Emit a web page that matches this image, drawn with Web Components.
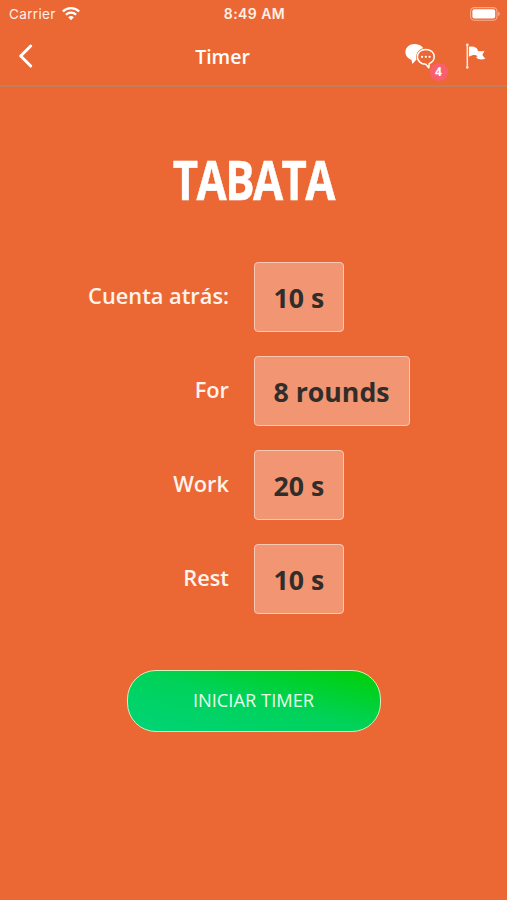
<!DOCTYPE html>
<html lang="es">
<head>
<meta charset="utf-8">
<title>Timer</title>
<style>
  body {
    margin: 0;
    background-color: #eb6834;
    color: white;
    font-family: "Open Sans", "Noto Sans", sans-serif;
  }
</style>
</head>
<body>
<timer-app></timer-app>

<script>
class StatusBar extends HTMLElement {
  constructor() {
    super();
    this.shadowDOM = this.attachShadow({mode: 'open'});
  }

  connectedCallback() {
    this.render();
  }

  render() {
    this.shadowDOM.innerHTML = `
    <style>
      :host {
        box-sizing: border-box;
        display: grid;
        grid-template-columns: 1fr auto 1fr;
        align-items: center;
        height: 27px;
        padding: 0 7px 0 9px;
        font-family: Inter, sans-serif;
        font-size: 13.5px;
        color: #fff0e8;
      }

      .carrier {
        display: flex;
        align-items: center;
        gap: 6px;
        letter-spacing: 0.35px;
      }

      .clock {
        font-weight: 600;
        font-size: 14px;
        letter-spacing: 0.45px;
      }

      .battery {
        justify-self: end;
      }

      svg {
        display: block;
      }
    </style>
    <div class="carrier">
      <span>Carrier</span>
      <svg width="18" height="14" viewBox="0 0 18 14" fill="none" stroke="white" stroke-width="2.3">
        <path d="M0.9 4.5a11.5 11.5 0 0 1 16.2 0"/>
        <path d="M3.9 7.8a7.2 7.2 0 0 1 10.2 0"/>
        <path d="M6.2 10.3a4 4 0 0 1 5.6 0L9 13.2z" fill="white" stroke="none"/>
      </svg>
    </div>
    <div class="clock"><slot></slot></div>
    <svg class="battery" width="30" height="14" viewBox="0 0 30 14">
      <rect x="0.6" y="0.6" width="26.4" height="12.6" rx="3.8" fill="none" stroke="#f6ae90" stroke-width="1.1"/>
      <rect x="2.4" y="2.3" width="22.8" height="9.2" rx="2" fill="white"/>
      <path d="M28.2 4.8q1.6 .6 1.6 2.1t-1.6 2.1z" fill="#f6ae90"/>
    </svg>
    `;
  }
}
customElements.define('status-bar', StatusBar);


class NavBar extends HTMLElement {
  constructor() {
    super();
    this.shadowDOM = this.attachShadow({mode: 'open'});
  }

  connectedCallback() {
    this.render();
  }

  render() {
    this.shadowDOM.innerHTML = `
    <style>
      :host {
        box-sizing: border-box;
        display: grid;
        grid-template-columns: 1fr auto 1fr;
        align-items: center;
        height: 60px;
        padding: 0 21px 0 18px;
        border-bottom: 2px solid #c27d5c;
      }

      h1 {
        margin: 0 59px 0 0;
        padding-top: 2px;
        font-size: 19.5px;
        line-height: 28px;
        font-weight: 600;
      }

      .actions {
        display: flex;
        justify-content: flex-end;
        gap: 30px;
      }

      .chat {
        position: relative;
      }

      /* unread counter over the chat icon */
      .badge {
        position: absolute;
        left: 24.5px;
        top: 20px;
        width: 18px;
        height: 18px;
        border-radius: 50%;
        background-color: #fa5f70;
        font-size: 12px;
        line-height: 18px;
        font-weight: 700;
        text-align: center;
      }

      svg {
        display: block;
      }
    </style>
    <svg width="16" height="26" viewBox="0 0 16 26" fill="none" stroke="white" stroke-width="3" stroke-linecap="round" stroke-linejoin="round">
      <path d="M12.7 3L2.7 13l10 10"/>
    </svg>
    <h1><slot></slot></h1>
    <div class="actions">
      <div class="chat">
        <svg width="30" height="26" viewBox="0 0 30 26">
          <path d="M9.4 1C4.6 1 .4 4.3 .4 9c0 3.7 2.5 6.5 6 7.7L7.4 21l3.6-3.9L18.2 12 18 4.7C16 2.3 13 1 9.4 1z" fill="white"/>
          <path d="M20.8 6.4c-4.9 0-8.4 3.2-8.4 7.4 0 4.2 3.5 7.4 8.4 7.4l3 3.7.4-4.3c3-1.2 5-3.7 5-6.8 0-4.2-3.5-7.4-8.4-7.4z" fill="#eb6834" stroke="#eb6834" stroke-width="2.8"/>
          <path d="M20.8 6.4c-4.9 0-8.4 3.2-8.4 7.4 0 4.2 3.5 7.4 8.4 7.4l3 3.7.4-4.3c3-1.2 5-3.7 5-6.8 0-4.2-3.5-7.4-8.4-7.4z" fill="#eb6834" stroke="white" stroke-width="1.5" stroke-linejoin="round"/>
          <g fill="white"><circle cx="17" cy="13.8" r="1.15"/><circle cx="20.8" cy="13.8" r="1.15"/><circle cx="24.6" cy="13.8" r="1.15"/></g>
        </svg>
        <span class="badge">4</span>
      </div>
      <svg width="21" height="26" viewBox="0 0 21 26">
        <path d="M2.3 2.5v22" stroke="#ffe6da" stroke-width="1.5"/>
        <circle cx="2.3" cy="1.9" r="1.4" fill="#ffe6da"/>
        <circle cx="2.3" cy="24.4" r="1.3" fill="#ffe6da"/>
        <path d="M3.9 3.9c3.5-.9 7.6-.6 9 3.6v6.2C11 11.3 8 11.5 3.9 13.7z" fill="white"/>
        <path d="M12.5 7.7c2.4 .9 4.8 .8 7 0l-2.2 4.3 3 3.8c-3 1.2-7.4 1.3-9.2-1.7l1.4-.6z" fill="white"/>
      </svg>
    </div>
    `;
  }
}
customElements.define('nav-bar', NavBar);


class TimerField extends HTMLElement {
  constructor() {
    super();
    this.shadowDOM = this.attachShadow({mode: 'open'});
  }

  connectedCallback() {
    this.render();
  }

  render() {
    this.shadowDOM.innerHTML = `
    <style>
      :host {
        display: grid;
        grid-template-columns: 229px 1fr;
        column-gap: 25px;
        align-items: center;
      }

      .label {
        padding-bottom: 2px;
        font-size: 21.8px;
        line-height: 30px;
        font-weight: 600;
        text-align: right;
        color: #fff3ec;
      }

      .value {
        box-sizing: border-box;
        justify-self: start;
        height: 70px;
        padding: 0 19px 0 18.5px;
        border: 1px solid #f9c9b6;
        border-radius: 4px;
        background-color: #f19572;
        color: #302d2b;
        font-size: 26.7px;
        line-height: 69px;
        font-weight: 700;
      }
    </style>
    <div class="label">${this.getAttribute('label')}</div>
    <div class="value"><slot></slot></div>
    `;
  }
}
customElements.define('timer-field', TimerField);


class StartButton extends HTMLElement {
  constructor() {
    super();
    this.shadowDOM = this.attachShadow({mode: 'open'});
  }

  connectedCallback() {
    this.render();
  }

  render() {
    this.shadowDOM.innerHTML = `
    <style>
      :host {
        display: block;
      }

      button {
        display: block;
        box-sizing: border-box;
        width: 254px;
        height: 62px;
        padding: 0 0 3px;
        border: 1.5px solid #d3efba;
        border-radius: 29px;
        background: linear-gradient(to top right, #00d479, #00d25a 50%, #00d000) border-box;
        color: #e6ffe9;
        font-family: inherit;
        font-size: 18.3px;
        cursor: pointer;
      }
    </style>
    <button type="button"><slot></slot></button>
    `;
  }
}
customElements.define('start-button', StartButton);


class TimerApp extends HTMLElement {
  constructor() {
    super();
    this.shadowDOM = this.attachShadow({mode: 'open'});
  }

  connectedCallback() {
    this.render();
  }

  render() {
    this.shadowDOM.innerHTML = `
    <style>
      :host {
        display: block;
        min-height: 900px;
      }

      main {
        display: flex;
        flex-direction: column;
        align-items: center;
      }

      /* narrowed bold */
      h2 {
        margin: 55px 0 0;
        font-size: 54px;
        line-height: 74px;
        font-weight: 700;
        letter-spacing: -2px;
        transform: scaleX(0.81);
        -webkit-text-stroke: 0.5px white;
      }

      .fields {
        display: grid;
        row-gap: 24px;
        width: 100%;
        margin: 46px 0 56px;
      }
    </style>
    <status-bar>8:49 AM</status-bar>
    <nav-bar>Timer</nav-bar>
    <main>
      <h2>TABATA</h2>
      <div class="fields">
        <timer-field label="Cuenta atrás:">10 s</timer-field>
        <timer-field label="For">8 rounds</timer-field>
        <timer-field label="Work">20 s</timer-field>
        <timer-field label="Rest">10 s</timer-field>
      </div>
      <start-button>INICIAR TIMER</start-button>
    </main>
    `;
  }
}
customElements.define('timer-app', TimerApp);
</script>
</body>
</html>
